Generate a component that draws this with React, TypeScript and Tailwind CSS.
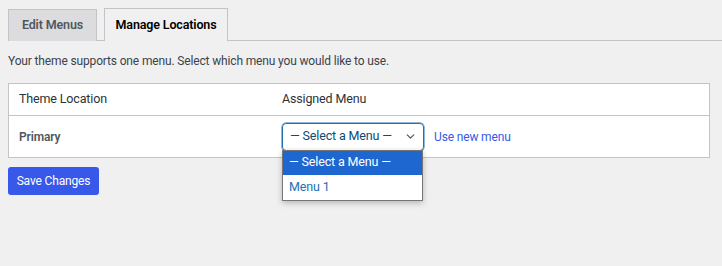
import { ChevronDown } from "lucide-react";

// menu locations -näkymä, tabit + taulukko + avattu select
const font = { fontFamily: 'Roboto, "Noto Sans", sans-serif', letterSpacing: "-0.15px" };

export default function App() {
  return (
    <div
      className="w-[722px] h-[266px] bg-[#f0f0f1] text-[12px] text-[#3c434a] overflow-hidden"
      style={font}
    >
      {/* tabit */}
      <div className="flex items-end ml-2 pt-2 border-b border-[#c3c4c7] h-[41px]">
        <div className="h-[32px] w-[89px] justify-center flex items-center bg-[#dcdcde] border border-[#c3c4c7] border-b-0 text-[#50575e] font-semibold text-[12.5px] -mb-px mr-[7px]">
          Edit Menus
        </div>
        <div className="h-[33px] w-[124px] justify-center flex items-center bg-[#f0f0f1] border border-[#c3c4c7] border-b-0 text-[#000] font-semibold text-[12.5px] -mb-px">
          Manage Locations
        </div>
      </div>

      <div className="px-2">
        <p className="mt-[11px] leading-[19px]">
          Your theme supports one menu. Select which menu you would like to use.
        </p>

        {/* taulukko */}
        <div className="mt-[12px] w-[702px] bg-white border border-[#c3c4c7]">
          <div className="h-[32px] flex items-center border-b border-[#c3c4c7] text-[#2c3338] text-[12.5px]">
            <span className="pl-[10px] w-[273px]">Theme Location</span>
            <span>Assigned Menu</span>
          </div>
          <div className="h-[41px] flex items-center">
            <span className="pl-[10px] w-[273px] font-semibold text-[#50575e] pt-px">Primary</span>
            <div className="relative">
              <div className="w-[142px] h-[28px] border border-[#2271b1] rounded-[4px] flex items-center pl-[7px] pr-[6px] text-[#0a4b78] text-[12.5px] whitespace-nowrap shadow-[0_0_0_0.5px_#2271b1]">
                <span className="flex-1">— Select a Menu —</span>
                <ChevronDown size={13} strokeWidth={2.2} className="text-[#50575e]" />
              </div>
              {/* avattu lista */}
              <div className="absolute left-0 top-[27px] w-[141px] bg-white border border-[#767676] shadow-[0_2px_6px_rgba(0,0,0,0.25)] z-10 text-[12.5px] whitespace-nowrap">
                <div className="h-[24px] flex items-center pl-[6px] bg-[#1e66d0] text-white">
                  — Select a Menu —
                </div>
                <div className="h-[25px] flex items-center pl-[6px] text-[#2271b1]">Menu 1</div>
              </div>
            </div>
            <a className="ml-[10px] text-[#3858e9] text-[12px]">Use new menu</a>
          </div>
        </div>

        <button className="mt-[9px] h-[28px] w-[91px] rounded-[3px] bg-[#3858e9] text-white text-[12px]">
          Save Changes
        </button>
      </div>
    </div>
  );
}
